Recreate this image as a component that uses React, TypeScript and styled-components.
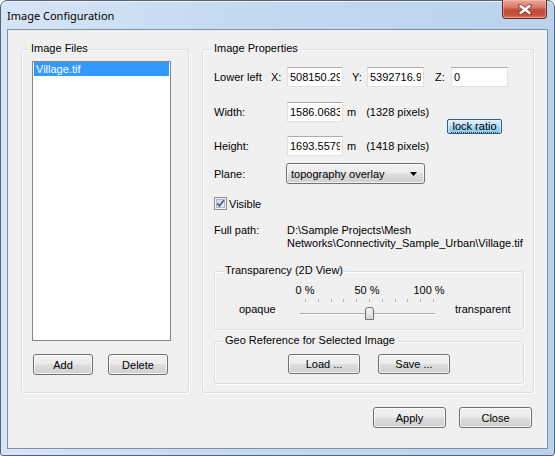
import React from "react";
import styled, { createGlobalStyle } from "styled-components";

const GlobalStyle = createGlobalStyle`
  html, body {
    margin: 0;
    padding: 0;
  }
  body {
    width: 555px;
    height: 456px;
    overflow: hidden;
    background: #ffffff;
    font-family: "Liberation Sans", Arial, sans-serif;
    font-size: 11px;
    color: #000;
  }
  * {
    box-sizing: border-box;
  }
`;

const Window = styled.div`
  width: 555px;
  height: 456px;
  display: flex;
  flex-direction: column;
  padding: 0 6px 6px 6px;
  border: 1px solid #52647b;
  border-radius: 7px 7px 3px 3px;
  background: linear-gradient(
    to right,
    #d6e5f6 0%,
    #c6daf1 40%,
    #bad2ed 100%
  );
  box-shadow: inset 0 1px 0 rgba(255, 255, 255, 0.7);
`;

const TitleBar = styled.div`
  height: 28px;
  display: flex;
  align-items: flex-start;
  justify-content: space-between;
`;

const TitleText = styled.span`
  font-family: "Noto Sans", "Open Sans", sans-serif;
  font-size: 11px;
  line-height: 29px;
  color: #000;
`;

const CloseButton = styled.div`
  width: 45px;
  height: 19px;
  margin-top: -1px;
  margin-right: 1px;
  display: flex;
  align-items: center;
  justify-content: center;
  border: 1px solid #6a2b22;
  border-top: none;
  border-radius: 0 0 4px 4px;
  background: linear-gradient(
    #e9a99b 0%,
    #d9796a 40%,
    #c44a36 55%,
    #c9533c 85%,
    #d88270 100%
  );
  box-shadow: inset 0 0 0 1px rgba(255, 200, 190, 0.45);
`;

const Client = styled.div`
  flex: 1;
  display: flex;
  flex-direction: column;
  padding: 19px 13px 0 13px;
  background: #f0f0f0;
  border: 1px solid #7f91a8;
`;

const Columns = styled.div`
  display: flex;
  gap: 13px;
`;

const Group = styled.div<{ $w: number; $h: number; $mt?: number }>`
  position: relative;
  width: ${(p) => p.$w}px;
  height: ${(p) => p.$h}px;
  margin-top: ${(p) => p.$mt ?? 0}px;
  flex-shrink: 0;
  border: 1px solid #d5dfe5;
  border-radius: 3px;
  box-shadow: inset 1px 1px 0 #ffffff, 1px 1px 0 #ffffff;
`;

const Caption = styled.span<{ $left: number }>`
  position: absolute;
  top: -8px;
  left: ${(p) => p.$left}px;
  padding: 0 2px;
  line-height: 13px;
  background: #f0f0f0;
  white-space: nowrap;
`;

const FilesBody = styled.div`
  padding: 11px 0 0 10px;
`;

const ListBox = styled.div`
  width: 139px;
  height: 280px;
  padding: 0 1px;
  background: #ffffff;
  border: 1px solid #828790;
`;

const ListItem = styled.div<{ $selected?: boolean }>`
  height: 14px;
  line-height: 14px;
  padding-left: 2px;
  background: ${(p) => (p.$selected ? "#3399ff" : "transparent")};
  color: ${(p) => (p.$selected ? "#ffffff" : "#000000")};
`;

const ButtonRow = styled.div<{ $mt: number; $ml: number; $gap: number }>`
  display: flex;
  gap: ${(p) => p.$gap}px;
  margin-top: ${(p) => p.$mt}px;
  margin-left: ${(p) => p.$ml}px;
`;

const Button = styled.button<{ $w: number; $h: number }>`
  width: ${(p) => p.$w}px;
  height: ${(p) => p.$h}px;
  padding: 0;
  font-family: "Liberation Sans", Arial, sans-serif;
  font-size: 11px;
  color: #000;
  border: 1px solid #707070;
  border-radius: 3px;
  background: linear-gradient(
    #f2f2f2 0%,
    #ebebeb 48%,
    #dddddd 52%,
    #cfcfcf 100%
  );
  box-shadow: inset 0 0 0 1px rgba(255, 255, 255, 0.75);
`;

const LockButton = styled.button`
  width: 55px;
  height: 15px;
  margin-top: 17px;
  padding: 0;
  display: flex;
  align-items: center;
  justify-content: center;
  overflow: hidden;
  font-family: "Liberation Sans", Arial, sans-serif;
  font-size: 11px;
  color: #000;
  border: 1px solid #2c5f8a;
  border-radius: 2px;
  background: linear-gradient(
    #dcf0fb 0%,
    #bfe2f7 45%,
    #a2d3f1 55%,
    #8cc6ea 100%
  );
  box-shadow: inset 0 0 0 1px rgba(255, 255, 255, 0.45);
`;

const FocusText = styled.span`
  line-height: 11px;
  padding: 0 1px;
  white-space: nowrap;
  border-bottom: 1px dotted #1d3a55;
`;

const PropsBody = styled.div`
  padding: 17px 0 0 11px;
  display: flex;
  flex-direction: column;
`;

const Row = styled.div<{ $mt?: number; $h?: number }>`
  display: flex;
  align-items: center;
  height: ${(p) => p.$h ?? 20}px;
  margin-top: ${(p) => p.$mt ?? 0}px;
`;

const Label = styled.span<{ $w: number; $ml?: number }>`
  width: ${(p) => p.$w}px;
  margin-left: ${(p) => p.$ml ?? 0}px;
  flex-shrink: 0;
  white-space: nowrap;
`;

const Text = styled.span<{ $ml?: number }>`
  margin-left: ${(p) => p.$ml ?? 0}px;
  white-space: nowrap;
`;

const Field = styled.input<{ $w: number }>`
  width: ${(p) => p.$w}px;
  height: 20px;
  padding: 0 2px;
  flex-shrink: 0;
  font-family: "Liberation Sans", Arial, sans-serif;
  font-size: 11px;
  color: #000;
  background: #ffffff;
  border: 1px solid #dfe3e9;
  border-top-color: #abadb3;
  border-radius: 0;
  outline: none;
`;

const SizeBlock = styled.div`
  display: flex;
  align-items: flex-start;
  margin-top: 15px;
`;

const SizeRows = styled.div`
  width: 233px;
  display: flex;
  flex-direction: column;
`;

const Combo = styled.div`
  width: 139px;
  height: 21px;
  display: flex;
  align-items: center;
  padding: 0 7px 0 4px;
  border: 1px solid #707070;
  border-radius: 3px;
  background: linear-gradient(
    #f2f2f2 0%,
    #ebebeb 48%,
    #dddddd 52%,
    #cfcfcf 100%
  );
  box-shadow: inset 0 0 0 1px rgba(255, 255, 255, 0.75);
`;

const ComboText = styled.span`
  flex: 1;
  white-space: nowrap;
`;

const CheckLabel = styled.span`
  margin-left: 2px;
`;

const PathRow = styled.div`
  display: flex;
  margin-top: 14px;
  line-height: 13px;
`;

const PathText = styled.span`
  width: 236px;
`;

const TicksRow = styled.div`
  display: flex;
  gap: 22px;
  margin: 12px 0 0 70px;
  height: 13px;
  line-height: 13px;
`;

const TickLabel = styled.span`
  width: 40px;
  text-align: center;
`;

const SliderRow = styled.div`
  display: flex;
  align-items: flex-start;
  height: 24px;
`;

const SideLabel = styled.span<{ $w?: number; $ml: number }>`
  width: ${(p) => (p.$w ? `${p.$w}px` : "auto")};
  margin-left: ${(p) => p.$ml}px;
  margin-top: 6px;
  line-height: 13px;
  flex-shrink: 0;
`;

const Footer = styled.div`
  display: flex;
  justify-content: flex-end;
  gap: 13px;
  margin-top: 14px;
  padding-right: 2px;
`;

const CloseGlyph = () => (
  <svg width="14" height="11" viewBox="0 0 14 11">
    <path
      d="M2 1.5 L12 9.5 M12 1.5 L2 9.5"
      stroke="#5a2119"
      strokeWidth="4"
      strokeLinecap="round"
      opacity="0.55"
    />
    <path
      d="M2.5 2 L11.5 9 M11.5 2 L2.5 9"
      stroke="#ffffff"
      strokeWidth="2.4"
      strokeLinecap="round"
    />
  </svg>
);

const CheckBox = () => (
  <svg width="13" height="13" viewBox="0 0 13 13">
    <defs>
      <linearGradient id="cbFill" x1="0" y1="0" x2="1" y2="1">
        <stop offset="0" stopColor="#c9d6e8" />
        <stop offset="1" stopColor="#eef3f9" />
      </linearGradient>
    </defs>
    <rect x="0.5" y="0.5" width="12" height="12" fill="#f4f4f4" stroke="#8e8f8f" />
    <rect x="2.5" y="2.5" width="8" height="8" fill="url(#cbFill)" stroke="#a9b8cc" />
    <path
      d="M3.2 6.4 L5.4 8.8 L9.9 3.2"
      fill="none"
      stroke="#4b6392"
      strokeWidth="1.8"
    />
  </svg>
);

const ComboArrow = () => (
  <svg width="7" height="4" viewBox="0 0 7 4">
    <path d="M0 0 H7 L3.5 4 Z" fill="#000" />
  </svg>
);

const SliderDrawing = () => {
  const ticks = Array.from({ length: 11 }, (_, i) => Math.round(8 + i * 12.8));
  return (
    <svg width="141" height="24" viewBox="0 0 141 24">
      <defs>
        <linearGradient id="thumbFill" x1="0" y1="0" x2="0" y2="1">
          <stop offset="0" stopColor="#f7f7f7" />
          <stop offset="1" stopColor="#d6d6d6" />
        </linearGradient>
      </defs>
      {ticks.map((x) => (
        <rect key={x} x={x} y="2" width="1" height="3" fill="#b4b4b4" />
      ))}
      <rect x="3" y="16" width="135" height="1" fill="#a9a9a9" />
      <rect x="3" y="17" width="135" height="1" fill="#ffffff" />
      <path
        d="M68.5 22.5 V13 Q68.5 10.5 71 10.5 H74 Q76.5 10.5 76.5 13 V22.5 Z"
        fill="url(#thumbFill)"
        stroke="#707070"
      />
    </svg>
  );
};

const App: React.FC = () => {
  return (
    <>
      <GlobalStyle />
      <Window>
        <TitleBar>
          <TitleText>Image Configuration</TitleText>
          <CloseButton>
            <CloseGlyph />
          </CloseButton>
        </TitleBar>
        <Client>
          <Columns>
            <Group $w={168} $h={344}>
              <Caption $left={7}>Image Files</Caption>
              <FilesBody>
                <ListBox>
                  <ListItem $selected>Village.tif</ListItem>
                </ListBox>
                <ButtonRow $mt={13} $ml={1} $gap={15}>
                  <Button $w={60} $h={21}>Add</Button>
                  <Button $w={60} $h={21}>Delete</Button>
                </ButtonRow>
              </FilesBody>
            </Group>

            <Group $w={332} $h={344}>
              <Caption $left={9}>Image Properties</Caption>
              <PropsBody>
                <Row>
                  <Label $w={57}>Lower left</Label>
                  <Label $w={16}>X:</Label>
                  <Field $w={56} value="508150.29" readOnly />
                  <Label $w={15} $ml={9}>Y:</Label>
                  <Field $w={57} value="5392716.9" readOnly />
                  <Label $w={16} $ml={11}>Z:</Label>
                  <Field $w={57} value="0" readOnly />
                </Row>

                <SizeBlock>
                  <SizeRows>
                    <Row>
                      <Label $w={73}>Width:</Label>
                      <Field $w={56} value="1586.0683" readOnly />
                      <Text $ml={4}>m</Text>
                      <Text $ml={10}>(1328 pixels)</Text>
                    </Row>
                    <Row $mt={14}>
                      <Label $w={73}>Height:</Label>
                      <Field $w={56} value="1693.5579" readOnly />
                      <Text $ml={4}>m</Text>
                      <Text $ml={10}>(1418 pixels)</Text>
                    </Row>
                  </SizeRows>
                  <LockButton>
                    <FocusText>lock ratio</FocusText>
                  </LockButton>
                </SizeBlock>

                <Row $mt={7} $h={21}>
                  <Label $w={72}>Plane:</Label>
                  <Combo>
                    <ComboText>topography overlay</ComboText>
                    <ComboArrow />
                  </Combo>
                </Row>

                <Row $mt={13} $h={13}>
                  <CheckBox />
                  <CheckLabel>Visible</CheckLabel>
                </Row>

                <PathRow>
                  <Label $w={73}>Full path:</Label>
                  <PathText>
                    {"D:\\Sample Projects\\Mesh Networks\\Connectivity_Sample_Urban\\Village.tif"}
                  </PathText>
                </PathRow>

                <Group $w={310} $h={59} $mt={21}>
                  <Caption $left={8}>Transparency (2D View)</Caption>
                  <TicksRow>
                    <TickLabel>0 %</TickLabel>
                    <TickLabel>50 %</TickLabel>
                    <TickLabel>100 %</TickLabel>
                  </TicksRow>
                  <SliderRow>
                    <SideLabel $w={58} $ml={24}>opaque</SideLabel>
                    <SliderDrawing />
                    <SideLabel $ml={17}>transparent</SideLabel>
                  </SliderRow>
                </Group>

                <Group $w={310} $h={43} $mt={11}>
                  <Caption $left={8}>Geo Reference for Selected Image</Caption>
                  <ButtonRow $mt={12} $ml={73} $gap={18}>
                    <Button $w={72} $h={20}>Load ...</Button>
                    <Button $w={72} $h={20}>Save ...</Button>
                  </ButtonRow>
                </Group>
              </PropsBody>
            </Group>
          </Columns>

          <Footer>
            <Button $w={73} $h={21}>Apply</Button>
            <Button $w={73} $h={21}>Close</Button>
          </Footer>
        </Client>
      </Window>
    </>
  );
};

export default App;
